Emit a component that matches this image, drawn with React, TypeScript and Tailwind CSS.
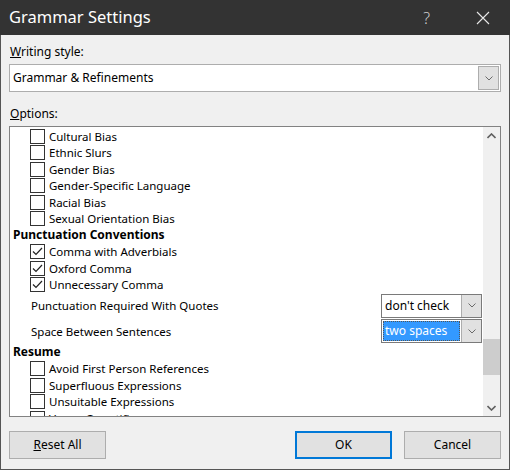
const font = { fontFamily: '"Noto Sans", "Open Sans", sans-serif' }

const Chevron = ({ up = false, className = '' }: { up?: boolean; className?: string }) => (
  <svg width="9" height="6" viewBox="0 0 9 6" className={className}>
    <path
      d={up ? 'M0.5 5 L4.5 1 L8.5 5' : 'M0.5 1 L4.5 5 L8.5 1'}
      fill="none"
      stroke="currentColor"
      strokeWidth="1.6"
    />
  </svg>
)

const SmallChevron = () => (
  <svg width="8" height="5" viewBox="0 0 8 5">
    <path d="M0.5 0.5 L4 4 L7.5 0.5" fill="none" stroke="#6a6a6a" strokeWidth="1" />
  </svg>
)

const CheckRow = ({ label, checked = false }: { label: string; checked?: boolean }) => (
  <div className="flex items-center h-[16.5px] shrink-0 pl-[20px]">
    <div className="w-[15px] h-[15px] border border-[#333] bg-white flex items-center justify-center shrink-0">
      {checked && (
        <svg width="11" height="9" viewBox="0 0 11 9">
          <path d="M1 4.5 L4 7.5 L10 1" fill="none" stroke="#222" strokeWidth="1.2" />
        </svg>
      )}
    </div>
    <span className="ml-[4px] text-[11.5px] leading-none text-black whitespace-nowrap">{label}</span>
  </div>
)

const Heading = ({ label }: { label: string }) => (
  <div className="flex items-center h-[16.5px] shrink-0 pl-[3px] text-[12px] font-bold leading-none">{label}</div>
)

const Combo = ({ label, value, selected = false }: { label: string; value: string; selected?: boolean }) => (
  <div className="flex items-center justify-between h-[25.5px] shrink-0 pl-[21px] pr-[1px]">
    <span className="text-[11.5px] leading-none">{label}</span>
    <div className="flex w-[101px] h-[24px] border border-[#7a7a7a] bg-white">
      <div className="flex-1 p-[1px]">
        <div
          className={
            selected
              ? 'h-full bg-[#3399ff] text-white border border-dotted border-[#555] flex items-center pl-[1px] text-[12px] leading-none'
              : 'h-full flex items-center pl-[2px] text-[12px] leading-none'
          }
        >
          {value}
        </div>
      </div>
      <div className="w-[20px] bg-[#e1e1e1] border-l border-[#adadad] flex items-center justify-center">
        <SmallChevron />
      </div>
    </div>
  </div>
)

const Button = ({ children, primary = false }: { children: React.ReactNode; primary?: boolean }) => (
  <div
    className={
      'w-[97px] h-[28px] bg-[#e1e1e1] flex items-center justify-center text-[12px] ' +
      (primary ? 'border-2 border-[#0078d7]' : 'border border-[#adadad]')
    }
  >
    {children}
  </div>
)

export default function App() {
  return (
    <div className="w-[510px] h-[470px] bg-[#f0f0f0] flex flex-col text-black overflow-hidden" style={font}>
      <div className="h-[35px] bg-[#333333] flex items-center justify-between shrink-0">
        <span className="pl-[9px] text-white text-[16.5px] leading-none">Grammar Settings</span>
        <div className="flex items-center">
          <span className="text-[#d0d0d0] text-[16px] font-light mr-[46px]">?</span>
          <svg width="14" height="14" viewBox="0 0 14 14" className="mr-[20px]">
            <path d="M1 1 L13 13 M13 1 L1 13" stroke="#e8e8e8" strokeWidth="1.1" />
          </svg>
        </div>
      </div>

      <div className="flex-1 flex flex-col border-x border-b border-[#555] px-[8px]">
        <div className="pt-[11px] pl-[1px] text-[12px] leading-none h-[29px] flex items-start">
          <span>
            <span className="underline">W</span>riting style:
          </span>
        </div>
        <div className="h-[28px] border border-[#adadad] bg-white flex items-center">
          <span className="flex-1 pl-[3px] text-[12px] leading-none">Grammar &amp; Refinements</span>
          <div className="w-[21px] h-[24px] mr-[1px] bg-[#e1e1e1] border border-[#adadad] flex items-center justify-center">
            <SmallChevron />
          </div>
        </div>

        <div className="mt-[16px] pl-[1px] text-[12px] leading-none h-[18px]">
          <span className="underline">O</span>ptions:
        </div>

        <div className="h-[291px] border border-[#828282] bg-white flex overflow-hidden">
          <div className="flex-1 flex flex-col pt-[1px]">
            <CheckRow label="Cultural Bias" />
            <CheckRow label="Ethnic Slurs" />
            <CheckRow label="Gender Bias" />
            <CheckRow label="Gender-Specific Language" />
            <CheckRow label="Racial Bias" />
            <CheckRow label="Sexual Orientation Bias" />
            <Heading label="Punctuation Conventions" />
            <CheckRow label="Comma with Adverbials" checked />
            <CheckRow label="Oxford Comma" checked />
            <CheckRow label="Unnecessary Comma" checked />
            <Combo label="Punctuation Required With Quotes" value="don't check" />
            <Combo label="Space Between Sentences" value="two spaces" selected />
            <Heading label="Resume" />
            <CheckRow label="Avoid First Person References" />
            <CheckRow label="Superfluous Expressions" />
            <CheckRow label="Unsuitable Expressions" />
            <CheckRow label="Vague Quantifiers" />
          </div>
          <div className="w-[17px] bg-[#f0f0f0] flex flex-col items-center shrink-0">
            <div className="h-[17px] flex items-center justify-center text-[#606060]">
              <Chevron up />
            </div>
            <div className="flex-1 flex flex-col w-full">
              <div className="h-[195px]" />
              <div className="h-[36px] bg-[#cdcdcd] w-full" />
            </div>
            <div className="h-[17px] flex items-center justify-center text-[#606060]">
              <Chevron />
            </div>
          </div>
        </div>

        <div className="flex items-center justify-between mt-[14px]">
          <Button>
            <span>
              <span className="underline">R</span>eset All
            </span>
          </Button>
          <div className="flex gap-[12px]">
            <Button primary>OK</Button>
            <Button>Cancel</Button>
          </div>
        </div>
      </div>
    </div>
  )
}
